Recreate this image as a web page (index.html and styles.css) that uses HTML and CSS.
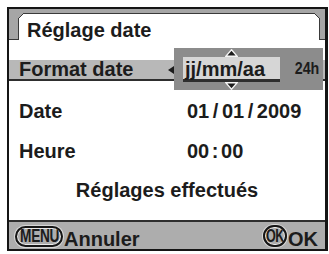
FILE: index.html
```html
<!DOCTYPE html>
<html>
<head>
<meta charset="utf-8">
<link rel="stylesheet" href="styles.css">
</head>
<body>
<div class="frame">
  <div class="header">
    <div class="strip strip-l"></div>
    <div class="tab-wrap"><div class="tab">Réglage date</div></div>
    <div class="strip strip-r"></div>
  </div>
  <div class="rows">
    <div class="row sel">
      <span class="label short">Format date</span>
      <svg class="larrow" width="6" height="8" viewBox="0 0 6 8"><polygon points="6,0 6,8 0,4" fill="#1c1c1c"/></svg>
    </div>
    <div class="row"><span class="label">Date</span><span class="val date">01 / 01 / 2009</span></div>
    <div class="row"><span class="label">Heure</span><span class="val time">00 : 00</span></div>
    <div class="row center">Réglages effectués</div>
  </div>
  <div class="bar">
    <span class="key menu"><span class="cond">MENU</span></span><span class="btxt">Annuler</span>
    <span class="spacer"></span>
    <span class="key ok"><span class="cond okc">OK</span></span><span class="btxt okt">OK</span>
  </div>
  <div class="popup">
    <div class="arrows"><svg width="13" height="8" viewBox="0 0 13 8"><polygon points="6.5,0.8 12.2,7.3 0.8,7.3" fill="#1c1c1c" stroke="#f4f4f4" stroke-width="1.4"/></svg></div>
    <div class="pmid">
      <div class="field">jj/mm/aa</div>
      <div class="h24"><span class="cond24">24h</span></div>
    </div>
    <div class="arrows"><svg width="13" height="8" viewBox="0 0 13 8"><polygon points="0.8,0.7 12.2,0.7 6.5,7.2" fill="#1c1c1c" stroke="#f4f4f4" stroke-width="1.4"/></svg></div>
  </div>
</div>
</body>
</html>
```

FILE: styles.css
```css
html, body {
  margin: 0;
  padding: 0;
  background: #ffffff;
}
body {
  font-family: "Liberation Sans", Arial, sans-serif;
  font-weight: bold;
  color: #1c1c1c;
}
.frame {
  position: relative;
  box-sizing: border-box;
  margin: 7px 0 0 7px;
  width: 321px;
  height: 244px;
  border: 2px solid #151515;
  border-right-width: 3px;
  background: #ffffff;
  display: flex;
  flex-direction: column;
}
.header {
  display: flex;
  height: 31px;
  flex: none;
}
.strip {
  box-sizing: border-box;
  background: #a6a6a6;
  border-bottom: 1px solid #3a3a3a;
}
.strip-l { width: 9px; }
.strip-r { width: 5px; }
.tab-wrap {
  flex: 1;
  background: #a6a6a6;
  padding-top: 4px;
}
.tab {
  position: relative;
  box-sizing: border-box;
  height: 27px;
  background: #ffffff;
  border: 1px solid #3a3a3a;
  border-bottom: none;
  padding: 6px 0 0 8px;
  font-size: 20px;
  line-height: 20px;
}
.tab::before, .tab::after {
  content: "";
  position: absolute;
  top: -1px;
  width: 6px;
  height: 6px;
}
.tab::before {
  left: -1px;
  background: linear-gradient(135deg, #a6a6a6 0, #a6a6a6 42%, #3a3a3a 42%, #3a3a3a 58%, #ffffff 58%);
}
.tab::after {
  right: -1px;
  background: linear-gradient(225deg, #a6a6a6 0, #a6a6a6 42%, #3a3a3a 42%, #3a3a3a 58%, #ffffff 58%);
}
.rows {
  display: flex;
  flex-direction: column;
  gap: 20px;
  margin-top: 20px;
}
.row {
  display: flex;
  align-items: center;
  height: 20px;
  padding-left: 10px;
  font-size: 20px;
  line-height: 20px;
}
.row.sel {
  box-sizing: border-box;
  height: 21px;
  line-height: 19px;
  background: #b8b8b8;
  border-bottom: 2px solid #2e2e2e;
}
.label {
  width: 168px;
  flex: none;
}
.label.short { width: 149px; }
.larrow { flex: none; }
.val.date { word-spacing: -2px; }
.val.time { word-spacing: -3px; }
.row.center {
  justify-content: center;
  padding-left: 0;
  margin-top: -1px;
}
.bar {
  margin-top: auto;
  box-sizing: border-box;
  height: 29px;
  flex: none;
  background: #adadad;
  border-top: 2px solid #2e2e2e;
  display: flex;
  align-items: flex-end;
  padding: 0 7px 0 6px;
}
.key {
  box-sizing: border-box;
  display: flex;
  align-items: center;
  justify-content: center;
  border: 2px solid #161616;
  box-shadow: inset 0 0 0 1px #e8e8e8, 0 0 0 1px #d8d8d8;
  margin-bottom: 2px;
  overflow: hidden;
}
.key.menu {
  width: 48px;
  height: 21px;
  border-radius: 11px;
}
.key.ok {
  width: 24px;
  height: 22px;
  border-radius: 11px;
}
.cond {
  display: inline-block;
  font-size: 18px;
  line-height: 17px;
  transform: scaleX(0.76);
  letter-spacing: -0.5px;
}
.cond.okc {
  font-size: 18px;
  transform: scaleX(0.7);
  letter-spacing: -0.5px;
}
.btxt {
  font-size: 20px;
  line-height: 20px;
  margin-left: 1px;
}
.btxt.okt { margin-left: 1px; }
.spacer { flex: 1; }
.popup {
  position: absolute;
  left: 165px;
  top: 39px;
  width: 149px;
  height: 42px;
  box-sizing: border-box;
  background: #8c8c8c;
  padding: 1px 0 0 9px;
  display: flex;
  flex-direction: column;
}
.arrows {
  width: 97px;
  height: 7px;
  display: flex;
  justify-content: center;
}
.arrows svg { display: block; }
.pmid {
  display: flex;
  margin-top: 1px;
  height: 25px;
}
.field {
  box-sizing: border-box;
  width: 97px;
  height: 25px;
  background: #d6d6d6;
  border-bottom: 3px solid #2e2e2e;
  padding: 2px 0 0 2px;
  font-size: 20px;
  line-height: 20px;
}
.h24 {
  margin-left: auto;
  padding: 3px 4px 0 0;
  font-size: 17px;
  line-height: 17px;
}
.cond24 {
  display: inline-block;
  transform: scaleX(0.84);
  transform-origin: right center;
}
```
